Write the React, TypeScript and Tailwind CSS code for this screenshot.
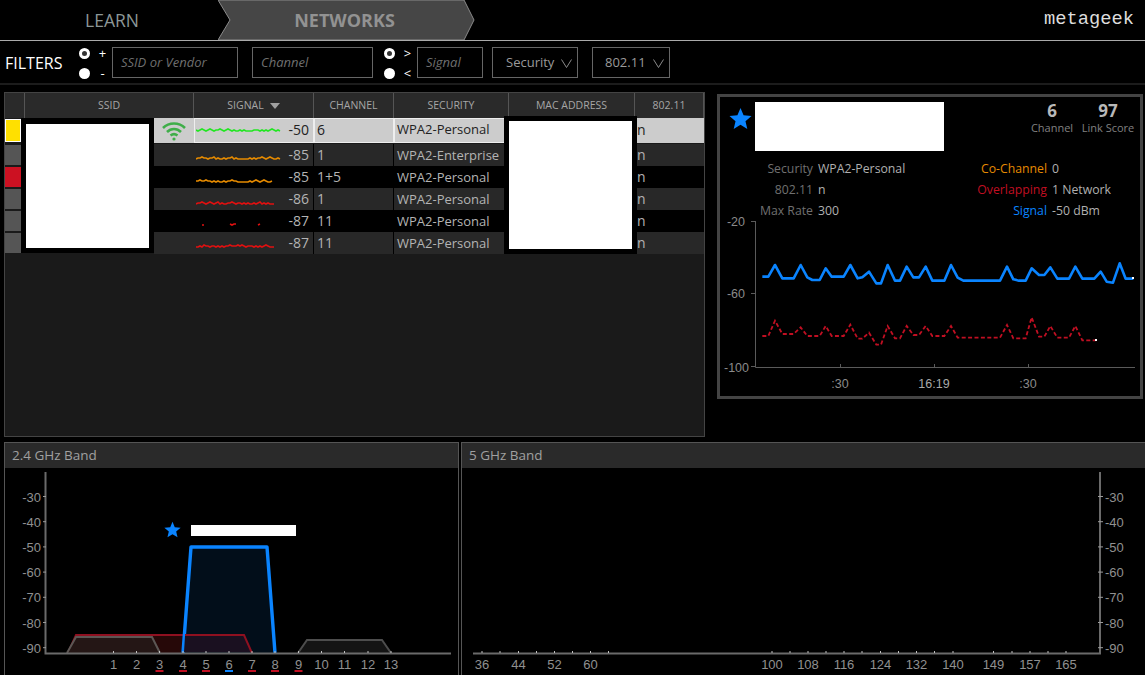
import React from "react";

const uiFont = "font-['Open_Sans',sans-serif]";

const Radio = ({ on }: { on?: boolean }) => (
  <span
    className={
      on
        ? "block w-[11px] h-[11px] rounded-full border-[3px] border-white bg-[#333]"
        : "block w-[11px] h-[11px] rounded-full bg-white"
    }
  />
);

const RadioPair = ({ a, b }: { a: string; b: string }) => (
  <div className="flex flex-col gap-[9px] mt-[2px]">
    <div className="flex items-center gap-[8px] h-[11px]">
      <Radio on />
      <span className="text-white text-[13px] w-[9px] leading-none text-center">{a}</span>
    </div>
    <div className="flex items-center gap-[8px] h-[11px]">
      <Radio />
      <span className="text-white text-[13px] w-[9px] leading-none text-center">{b}</span>
    </div>
  </div>
);

const Chevron = () => (
  <svg width="11" height="9" viewBox="0 0 11 9" fill="none" stroke="#8a8a8a" strokeWidth="1">
    <path d="M0.5 0.5 L5.5 8.5 L10.5 0.5" />
  </svg>
);

const columns = [
  { label: "SSID", width: "w-[169px]" },
  { label: "SIGNAL", width: "w-[120px]" },
  { label: "CHANNEL", width: "w-[80px]" },
  { label: "SECURITY", width: "w-[115px]" },
  { label: "MAC ADDRESS", width: "w-[126px]" },
  { label: "802.11", width: "w-[69px]" },
];

const rows = [
  { swatch: "bg-[#ffe000]", signal: "-50", channel: "6", security: "WPA2-Personal", color: "#22e622", base: 12, spark: "1012101210112101210100101000011101010121010", selected: true },
  { swatch: "bg-[#555555]", signal: "-85", channel: "1", security: "WPA2-Enterprise", color: "#e58a00", base: 15, spark: "0112110112010010112010000001010112101210010", even: true },
  { swatch: "bg-[#cc1122]", signal: "-85", channel: "1+5", security: "WPA2-Personal", color: "#e58a00", base: 16, spark: "112112110101001011211000000101210121001" },
  { swatch: "bg-[#555555]", signal: "-86", channel: "1", security: "WPA2-Personal", color: "#e01010", base: 16, spark: "0112101210120100112101101010010120101000", even: true },
  { swatch: "bg-[#555555]", signal: "-87", channel: "11", security: "WPA2-Personal", color: "#e01010", base: 15, spark: "...00............1011..........01" },
  { swatch: "bg-[#555555]", signal: "-87", channel: "11", security: "WPA2-Personal", color: "#e01010", base: 15, spark: "0010211011010101121112121011101010121000", even: true },
];

const sparkPath = (spark: string, base: number) => {
  let d = "";
  let pen = false;
  spark.split("").forEach((c, i) => {
    if (c === ".") {
      pen = false;
      return;
    }
    d += `${pen ? "L" : "M"}${i * 2} ${base - Number(c)} `;
    pen = true;
  });
  return d;
};

const Row = ({ row }: { row: (typeof rows)[number] }) => {
  const bg = row.selected ? "bg-[#cccccc]" : row.even ? "bg-[#282828]" : "bg-black";
  const text = row.selected ? "text-[#222222]" : "text-[#b4b4b4]";
  const cell = row.selected ? "border border-[#eeeeee]" : "border-r border-black";
  return (
    <div className={row.selected ? "flex h-[25px] mb-[1px]" : "flex h-[22px]"}>
      <div className="w-[17px] h-full py-[1px] pr-[1px]">
        <div className={`w-full h-full ${row.swatch} ${row.selected ? "border border-white" : ""}`} />
      </div>
      <div className="w-[132px]" />
      <div className={`w-[40px] flex items-center justify-center ${bg}`}>
        {row.selected && (
          <svg width="26" height="20" viewBox="0 0 26 20" fill="none" stroke="#3fae49" strokeWidth="2.6">
            <path d="M2 7 C8 1 18 1 24 7" />
            <path d="M6 11 C10 7 16 7 20 11" />
            <path d="M9.5 14.5 C11.5 13 14.5 13 16.5 14.5" />
            <circle cx="13" cy="18" r="1.6" fill="#3fae49" stroke="none" />
          </svg>
        )}
      </div>
      <div className={`w-[120px] flex items-center pr-[4px] ${row.selected ? "pl-[1px]" : "pl-[2px]"} ${bg} ${cell}`}>
        <svg className="w-[86px] h-full shrink-0" viewBox={`0 0 86 ${row.selected ? 23 : 22}`} fill="none" stroke={row.color} strokeWidth="1.6">
          <path d={sparkPath(row.spark, row.base)} />
        </svg>
        <span className={`ml-auto text-[14px] pb-[2px] ${text}`}>{row.signal}</span>
      </div>
      <div className={`w-[80px] flex items-center pb-[2px] text-[14px] ${row.selected ? "pl-[2px]" : "pl-[3px]"} ${bg} ${text} ${cell}`}>{row.channel}</div>
      <div className={`w-[115px] flex items-center text-[13px] whitespace-nowrap ${row.selected ? "pl-[2px] pb-[2px] border border-[#eeeeee]" : "pl-[3px] pt-[2px]"} ${bg} ${text}`}>
        {row.security}
      </div>
      <div className="w-[126px]" />
      <div className={`w-[69px] flex items-center pl-[2px] pb-[2px] text-[14px] ${bg} ${text}`}>n</div>
    </div>
  );
};

const Star = ({ size }: { size: number }) => (
  <svg width={size} height={size} viewBox="0 0 24 24" fill="#0a84ff">
    <path d="M12 1 L15.2 8.7 L23.5 9.4 L17.2 14.8 L19.1 23 L12 18.6 L4.9 23 L6.8 14.8 L0.5 9.4 L8.8 8.7 Z" />
  </svg>
);

const blueLine = [[142,140],[160,140],[180,105],[202,145],[236,145],[257,105],[277,142],[292,150],[314,150],[332,115],[350,140],[386,140],[406,105],[428,145],[442,142],[462,125],[484,160],[498,160],[518,105],[540,152],[555,152],[575,110],[595,142],[612,142],[632,110],[652,152],[688,152],[708,105],[728,143],[745,152],[855,152],[876,110],[895,148],[912,152],[932,152],[950,115],[972,135],[988,135],[1006,112],[1027,146],[1062,146],[1081,110],[1102,146],[1138,146],[1157,125],[1175,155],[1194,158],[1214,100],[1232,146],[1255,146]];
const redLine = [[142,318],[160,318],[180,272],[202,312],[236,312],[257,292],[277,318],[314,318],[332,288],[350,318],[386,318],[406,284],[428,326],[442,326],[462,308],[484,344],[498,344],[518,288],[540,325],[555,325],[575,288],[595,315],[612,315],[632,288],[652,318],[688,318],[708,288],[728,323],[855,323],[876,285],[895,325],[932,325],[950,262],[972,320],[988,320],[1006,288],[1027,323],[1062,323],[1081,288],[1102,331],[1142,331]];

// points were read off a 3x crop, chart svg starts at x=720 y=214
const toChart = (pts: number[][]) => pts.map(([x, y]) => `${x / 3 - 5},${y / 3 + 16}`).join(" ");

const DetailChart = () => (
  <svg width="420" height="182" className="block" fontFamily="'Liberation Sans',sans-serif" fontSize="12.5" fill="#8a8a8a">
    <path d="M35.5 7 V153.5 H415" fill="none" stroke="#5a5a5a" strokeWidth="1" />
    <path d="M35.5 7.5 H31 M35.5 79.5 H31 M35.5 152.5 H31 M120.5 153 V150 M214.5 153 V150 M308.5 153 V150" stroke="#5a5a5a" strokeWidth="1" />
    <text x="25" y="12" textAnchor="end">-20</text>
    <text x="25" y="84" textAnchor="end">-60</text>
    <text x="29" y="158" textAnchor="end">-100</text>
    <text x="120" y="174" textAnchor="middle">:30</text>
    <text x="214" y="174" textAnchor="middle" fill="#a8a8a8">16:19</text>
    <text x="308" y="174" textAnchor="middle">:30</text>
    <polyline points={toChart(blueLine)} fill="none" stroke="#0a84ff" strokeWidth="2.6" strokeLinejoin="round" />
    <polyline points={toChart(redLine)} fill="none" stroke="#c00f22" strokeWidth="1.8" strokeDasharray="4 2.4" />
    <rect x="412" y="63" width="2" height="2" fill="#ffffff" />
    <rect x="375" y="125" width="2" height="2" fill="#ffffff" />
  </svg>
);

const dbLevels = [-30, -40, -50, -60, -70, -80, -90];
const dbY = (i: number) => 28.5 + i * 25.2;

const band24 = [
  { n: 1, x: 113.5 }, { n: 2, x: 136.5 }, { n: 3, x: 159.5, mark: "#c00f22" }, { n: 4, x: 183, mark: "#c00f22" },
  { n: 5, x: 206, mark: "#c00f22" }, { n: 6, x: 229, mark: "#0a84ff" }, { n: 7, x: 252, mark: "#c00f22" },
  { n: 8, x: 275, mark: "#c00f22" }, { n: 9, x: 298.5, mark: "#c00f22" }, { n: 10, x: 321.5 }, { n: 11, x: 344.5 },
  { n: 12, x: 368 }, { n: 13, x: 391 },
];

const ticks5 = [482, 500, 518.5, 536.5, 554.5, 572.5, 590.5, 608.5, 772, 790, 808, 826, 844, 862, 880.5, 898.5, 916.5, 934.5, 953, 993.5, 1012, 1030, 1048, 1066];
const labels5 = [
  [36, 482], [44, 518.5], [52, 554.5], [60, 590.5], [100, 772], [108, 808], [116, 844], [124, 880.5], [132, 916.5],
  [140, 953], [149, 993.5], [157, 1030], [165, 1066],
];

const Chart24 = () => (
  <svg width="453" height="207" className="block" fontFamily="'Liberation Sans',sans-serif" fontSize="13" fill="#909090">
    {/* x here = page x - 5, y = page y - 468 */}
    <g transform="translate(-5 -468)">
      <polyline points="68,653 76,635 244,635 252,653" fill="#260808" stroke="#8f1020" strokeWidth="2" />
      <polyline points="67,653 76,637 152,637 160,653" fill="#241615" stroke="#5c5654" strokeWidth="2" />
      <polyline points="298,653 307,640 382,640 391,653" fill="#141414" stroke="#4d4d4d" strokeWidth="2" />
      <polyline points="183,653 191,547 267,547 275,653" fill="#020e1a" stroke="#0a84ff" strokeWidth="3.4" strokeLinejoin="round" />
      <polygon points="185,636 244,636 252,652 184,652" fill="#1a1020" />
      <polyline points="185,635 244,635 252,653" fill="none" stroke="#8f1020" strokeWidth="2" />
      <path d="M45.5 472 V653.5 H451" fill="none" stroke="#6a6a6a" strokeWidth="2" />
      {band24.map((c) => (
        <g key={c.n}>
          <path d={`M${c.x} 651 V653`} stroke="#c0c0c0" strokeWidth="1" />
          <text x={c.x} y="669" textAnchor="middle">{c.n}</text>
          {c.mark && <rect x={c.x - 4} y="670" width="8" height="2" fill={c.mark} />}
        </g>
      ))}
      <g transform="translate(164 521)">
        <Star size={17} />
      </g>
      <rect x="191" y="525" width="105" height="11" fill="#ffffff" />
    </g>
    {dbLevels.map((d, i) => (
      <g key={d}>
        <path d={`M38 ${dbY(i)} H41`} stroke="#9a9a9a" strokeWidth="1" />
        <text x="36" y={dbY(i) + 5} textAnchor="end">{d}</text>
      </g>
    ))}
  </svg>
);

const Chart5 = () => (
  <svg width="683" height="207" className="block" fontFamily="'Liberation Sans',sans-serif" fontSize="13" fill="#909090">
    <g transform="translate(-462 -468)">
      <path d="M473 653.5 H1100 V472" fill="none" stroke="#6a6a6a" strokeWidth="2" />
      {ticks5.map((x) => (
        <path key={x} d={`M${x} 651 V653`} stroke="#c0c0c0" strokeWidth="1" />
      ))}
      {labels5.map(([n, x]) => (
        <text key={n} x={x} y="669" textAnchor="middle">{n}</text>
      ))}
    </g>
    {dbLevels.map((d, i) => (
      <g key={d}>
        <path d={`M636 ${dbY(i)} H641`} stroke="#9a9a9a" strokeWidth="1" />
        <text x="643" y={dbY(i) + 5}>{d}</text>
      </g>
    ))}
  </svg>
);

const info = [
  ["Security", "WPA2-Personal", "Co-Channel", "text-[#e58a00]", "0"],
  ["802.11", "n", "Overlapping", "text-[#c00f22]", "1 Network"],
  ["Max Rate", "300", "Signal", "text-[#0a84ff]", "-50 dBm"],
];

export default function App() {
  return (
    <div className={`w-[1145px] h-[675px] bg-black overflow-hidden ${uiFont}`}>
      {/* top tabs */}
      <div className="flex items-center h-[41px] border-b border-[#aaaaaa]">
        <div className="w-[218px] text-center text-[17.5px] text-[#8c9797] pl-[6px]">LEARN</div>
        <div className="relative w-[257px] h-[40px] flex items-center justify-center">
          <svg className="absolute inset-0" width="257" height="40" viewBox="0 0 257 40">
            <polygon points="0,0 12,20 0,40 246,40 256,20 246,0" fill="#464646" stroke="#8a8a8a" strokeWidth="1" />
          </svg>
          <span className="relative text-[18px] font-bold text-[#929292] pr-[4px]">NETWORKS</span>
        </div>
        <div className="ml-auto pr-[11px] font-['Liberation_Mono',monospace] text-[18.75px] text-[#dddddd] leading-none pb-[2px]">metageek</div>
      </div>

      {/* filters */}
      <div className="flex items-center h-[44px] pl-[5px] border-b-2 border-[#1c1c1c]">
        <span className="text-[16px] text-white w-[74px] pt-[2px]">FILTERS</span>
        <RadioPair a="+" b="-" />
        <div className="ml-[5px] w-[126px] h-[31px] border border-[#666666] flex items-center pl-[8px] pt-[2px] italic text-[13px] text-[#6f6f6f]">SSID or Vendor</div>
        <div className="ml-[14px] w-[121px] h-[31px] border border-[#666666] flex items-center pl-[8px] pt-[2px] italic text-[13px] text-[#6f6f6f]">Channel</div>
        <div className="ml-[11px]">
          <RadioPair a=">" b="<" />
        </div>
        <div className="ml-[5px] w-[66px] h-[31px] border border-[#666666] flex items-center pl-[8px] pt-[2px] italic text-[13px] text-[#6f6f6f]">Signal</div>
        <div className="ml-[9px] w-[86px] h-[31px] border border-[#666666] flex items-center justify-between pl-[13px] pr-[5px] pt-[2px] text-[13px] text-[#9a9a9a]">
          Security <Chevron />
        </div>
        <div className="ml-[14px] w-[78px] h-[31px] border border-[#666666] flex items-center justify-between pl-[12px] pr-[5px] pt-[2px] text-[13px] text-[#9a9a9a]">
          802.11 <Chevron />
        </div>
      </div>

      {/* table and details */}
      <div className="flex items-start h-[357px] pt-[7px] pl-[4px]">
        <div className="relative w-[701px] h-[345px] bg-[#1a1a1a] border border-[#444444]">
          <div className="flex h-[25px] bg-[#2a2a2a]">
            <div className="w-[20px] border-r border-[#555555]" />
            {columns.map((c) => (
              <div key={c.label} className={`${c.width} flex items-center justify-center gap-[6px] border-r border-[#555555] text-[10.5px] text-[#a6a6a6]`}>
                {c.label}
                {c.label === "SIGNAL" && <span className="w-0 h-0 border-x-[5px] border-x-transparent border-t-[6px] border-t-[#a0a0a0]" />}
              </div>
            ))}
          </div>
          {rows.map((row, i) => (
            <Row key={i} row={row} />
          ))}
          {/* blanked out ssid + mac */}
          <div className="absolute left-[16px] top-[25px] w-[133px] h-[135px] bg-black pt-[6px] px-[5px]">
            <div className="w-[123px] h-[124px] bg-white" />
          </div>
          <div className="absolute left-[499px] top-[23px] w-[133px] h-[138px] bg-black p-[5px]">
            <div className="w-[123px] h-[128px] bg-white" />
          </div>
        </div>

        <div className="ml-[12px] mt-[2px] w-[426px] h-[305px] border-[3px] border-[#444444]">
          <div className="flex h-[62px] items-start pt-[5px]">
            <div className="ml-[9px] mt-[5px]">
              <Star size={23} />
            </div>
            <div className="ml-[3px] w-[189px] h-[49px] bg-white" />
            <div className="ml-auto -mt-[2px] flex gap-[7px] pr-[5px] text-center">
              <div className="w-[44px]">
                <div className="text-[17px] font-bold text-[#b8b8b8] leading-[22px]">6</div>
                <div className="text-[11px] text-[#808080] leading-[12px]">Channel</div>
              </div>
              <div className="w-[54px]">
                <div className="text-[17px] font-bold text-[#b8b8b8] leading-[22px]">97</div>
                <div className="text-[11px] text-[#808080] leading-[12px] whitespace-nowrap">Link Score</div>
              </div>
            </div>
          </div>
          <div className="flex flex-col text-[12.25px] h-[55px]">
            {info.map(([label, value, label2, color, value2]) => (
              <div key={label} className="flex items-center h-[21px] shrink-0">
                <span className="w-[93px] text-right text-[#707070]">{label}</span>
                <span className="ml-[5px] w-[136px] text-[#b0b0b0]">{value}</span>
                <span className={`w-[93px] text-right ${color}`}>{label2}</span>
                <span className="ml-[5px] text-[#b0b0b0]">{value2}</span>
              </div>
            ))}
          </div>
          <DetailChart />
        </div>
      </div>

      {/* bands */}
      <div className="flex h-[233px] pl-[4px]">
        <div className="w-[455px] border-l border-r border-[#555555]">
          <div className="h-[26px] flex items-center pl-[7px] pb-[1px] bg-[#2a2a2a] border-t border-[#555555] text-[13.5px] text-[#a0a0a0]">2.4 GHz Band</div>
          <Chart24 />
        </div>
        <div className="ml-[2px] flex-1 border-l border-[#555555]">
          <div className="h-[26px] flex items-center pl-[7px] pb-[1px] bg-[#2a2a2a] border-t border-[#555555] text-[13.5px] text-[#a0a0a0]">5 GHz Band</div>
          <Chart5 />
        </div>
      </div>
    </div>
  );
}
